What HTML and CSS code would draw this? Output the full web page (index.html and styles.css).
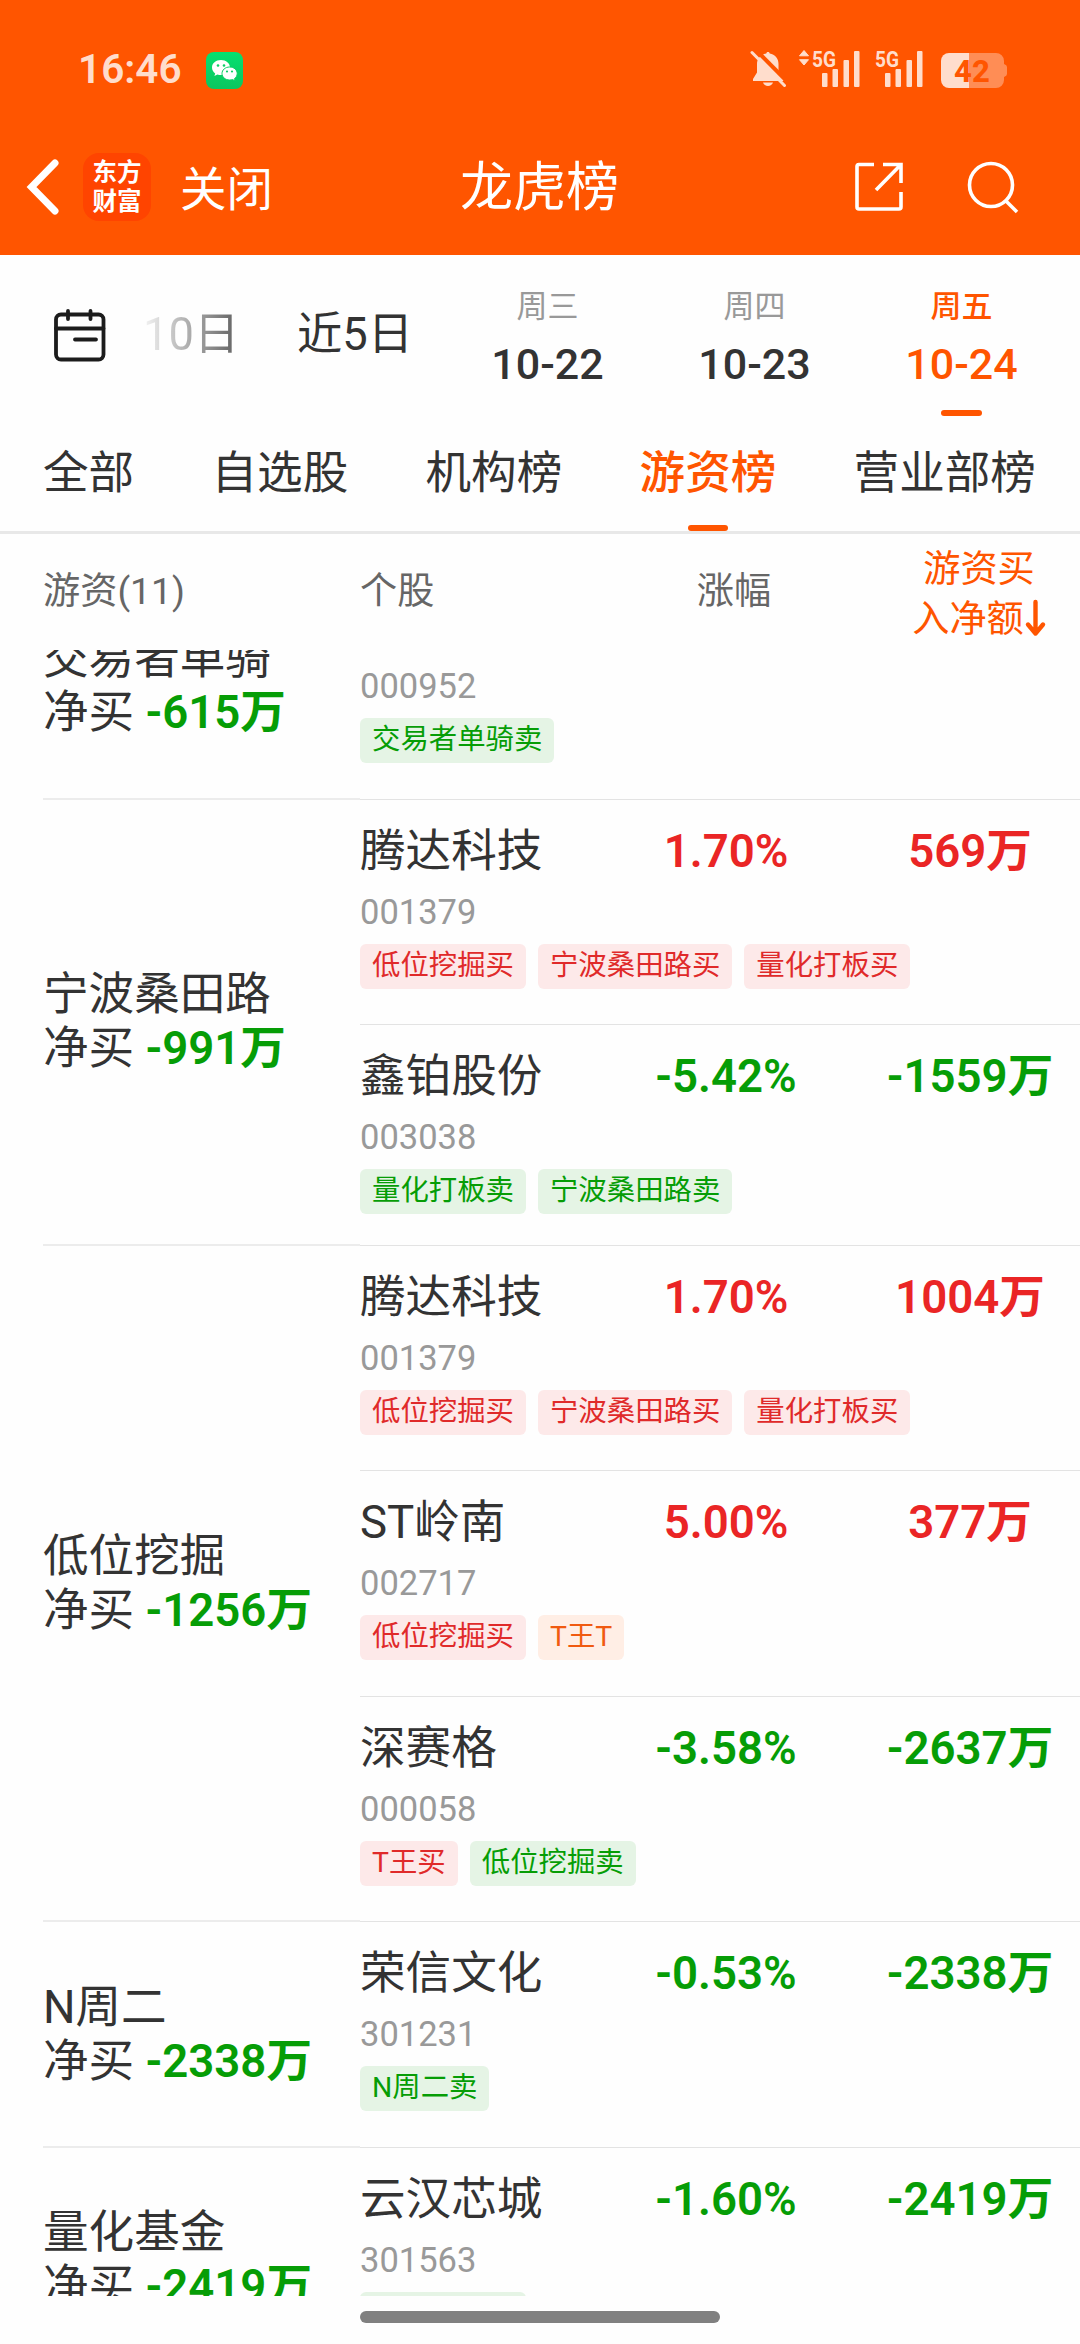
FILE: index.html
```html
<!DOCTYPE html>
<html lang="zh-CN">
<head>
  <meta charset="UTF-8" />
  <title>龙虎榜</title>
  <meta name="viewport" content="width=device-width, initial-scale=1.0" />
  <link rel="stylesheet" href="styles.css">
</head>
<body>
  <header class="header">
    <div class="status-bar">
      <span class="clock">16:46</span>
      <svg class="wechat" width="37" height="37" viewBox="0 0 37 37">
        <defs>
          <linearGradient id="wx" x1="0" y1="0" x2="0" y2="1">
            <stop offset="0" stop-color="#06e070" />
            <stop offset="1" stop-color="#0ac65f" />
          </linearGradient>
        </defs>
        <rect width="37" height="37" rx="8" fill="url(#wx)" />
        <path d="M15 8c-5.200 0-9 3.300-9 7.500 0 2.400 1.200 4.500 3.200 5.900l-.8 2.600 3-1.500c1.100.4 2.400.5 3.600.5 5 0 9-3.300 9-7.500S20 8 15 8z" fill="#fff" />
        <path d="M23.700 15c-4.500 0-7.700 3-7.700 6.500s3.200 6.500 7.700 6.500c1 0 2-.1 2.900-.4l2.600 1.300-.7-2.300c1.700-1.200 2.700-3 2.700-5.100 0-3.500-3.100-6.500-7.500-6.500z" fill="#fff" stroke="#0bd066" stroke-width="1" />
        <g fill="#0bd066">
          <circle cx="12" cy="13.500" r="1.300" /><circle cx="18" cy="13.500" r="1.300" />
          <circle cx="21" cy="19.500" r="1.100" /><circle cx="26" cy="19.500" r="1.100" />
        </g>
      </svg>
      <div class="status-icons">
        <svg class="bell" width="37" height="38" viewBox="0 0 37 38" fill="#ffddcc">
          <path d="M18 2c1 0 1.700.7 1.700 1.600C25 4.500 28.500 8.500 28.500 14v8l5 7v2H3v-2l4-6.500V14C7 8.500 11 4.500 16.300 3.600 16.300 2.700 17 2 18 2z" />
          <path d="M13 32.500h10c-.8 2.300-2.600 3.500-5 3.500s-4.200-1.200-5-3.500z" />
          <path d="M5-1 39 33.500" stroke="#ff5500" stroke-width="4" />
          <path d="M2 2.500 34.500 35.500" stroke="#ffddcc" stroke-width="3" stroke-linecap="round" />
        </svg>
        <svg class="signal" width="64" height="38" viewBox="0 0 64 38" fill="#ffddcc">
          <path d="M6 1.500 10.500 6.800h-9zM6 16 1.500 10.700h9z" stroke="#ffddcc" stroke-linejoin="round" />
          <text class="net" x="14" y="17.500" textLength="24" lengthAdjust="spacingAndGlyphs">5G</text>
          <g><rect x="24" y="24" width="5.500" height="14" rx="1" /><rect x="34.500" y="20" width="5.500" height="18" rx="1" /><rect x="45.500" y="11" width="5.500" height="27" rx="1" /><rect x="56" y="2" width="5.500" height="36" rx="1" /></g>
        </svg>
        <svg class="signal" width="64" height="38" viewBox="0 0 64 38" fill="#ffddcc">
          <text class="net" x="14" y="17.500" textLength="24" lengthAdjust="spacingAndGlyphs">5G</text>
          <g><rect x="24" y="24" width="5.500" height="14" rx="1" /><rect x="34.500" y="20" width="5.500" height="18" rx="1" /><rect x="45.500" y="11" width="5.500" height="27" rx="1" /><rect x="56" y="2" width="5.500" height="36" rx="1" /></g>
        </svg>
        <svg class="battery" width="67" height="35" viewBox="0 0 67 35">
          <path d="M28 0h27a8 8 0 0 1 8 8v3q3 1 3 3v7q0 2-3 3v3a8 8 0 0 1-8 8H28z" fill="#ff8d55" />
          <path d="M28 0H8a8 8 0 0 0-8 8v19a8 8 0 0 0 8 8h20z" fill="#ffddcc" />
          <text class="level" x="13" y="28.500">42</text>
        </svg>
      </div>
    </div>
    <nav class="nav-bar">
      <svg class="back" width="34" height="56" viewBox="0 0 34 56" fill="none" stroke="#fff" stroke-width="7" stroke-linecap="round">
        <path d="M29 4 5.500 28 29 52" />
      </svg>
      <div class="logo">东方<br>财富</div>
      <span class="close">关闭</span>
      <h1 class="title">龙虎榜</h1>
      <svg class="share" width="50" height="50" viewBox="0 0 50 50" fill="none" stroke="#fff" stroke-width="3.600">
        <path d="M20 2.500H5Q3 2.500 3 4.500V45q0 2 2 2h40q2 0 2-2V30" />
        <path d="M29 2.500h18V21M47 2.500 22 28" />
      </svg>
      <svg class="search" width="52" height="52" viewBox="0 0 52 52" fill="none" stroke="#fff" stroke-width="3.600">
        <circle cx="24" cy="24" r="21.500" />
        <path d="M38.500 39.500 50 51" />
      </svg>
    </nav>
  </header>

  <section class="dates">
    <svg class="calendar" width="54" height="54" viewBox="0 0 54 54" fill="none" stroke="#1c1c1c" stroke-width="3.800" stroke-linecap="round">
      <rect x="3" y="6.500" width="47.500" height="45" rx="5" />
      <path d="M3 20.500h47.500M15 3v8M37.500 3v8M22 31.500h21" />
    </svg>
    <span class="range fade">10日</span>
    <span class="range">近5日</span>
    <div class="day"><span class="week">周三</span><span class="date">10-22</span></div>
    <div class="day"><span class="week">周四</span><span class="date">10-23</span></div>
    <div class="day active"><span class="week">周五</span><span class="date">10-24</span></div>
  </section>

  <nav class="tabs">
    <span class="tab">全部</span>
    <span class="tab">自选股</span>
    <span class="tab">机构榜</span>
    <span class="tab active">游资榜</span>
    <span class="tab">营业部榜</span>
  </nav>

  <div class="table-head">
    <span class="th-trader">游资(11)</span>
    <span class="th-stock">个股</span>
    <span class="th-change">涨幅</span>
    <span class="th-amount">游资买<br>入净额<svg width="21" height="38" viewBox="0 0 21 38" fill="none" stroke="#ff5500" stroke-width="4.400" stroke-linecap="round" stroke-linejoin="round"><path d="M10.500 3v31M3 25.500l7.500 9 7.500-9" /></svg></span>
  </div>

  <main class="list">
    <section class="group first">
      <div class="trader">
        <p>交易者单骑</p>
        <p>净买 <b class="down">-615万</b></p>
      </div>
      <div class="stocks">
        <div class="stock">
          <div class="quote"></div>
          <div class="code">000952</div>
          <div class="tags"><span class="tag sell">交易者单骑卖</span></div>
        </div>
      </div>
    </section>

    <section class="group">
      <div class="trader">
        <p>宁波桑田路</p>
        <p>净买 <b class="down">-991万</b></p>
      </div>
      <div class="stocks">
        <div class="stock">
          <div class="quote"><span class="name">腾达科技</span><b class="up">1.70%</b><b class="up">569万</b></div>
          <div class="code">001379</div>
          <div class="tags"><span class="tag buy">低位挖掘买</span><span class="tag buy">宁波桑田路买</span><span class="tag buy">量化打板买</span></div>
        </div>
        <div class="stock short">
          <div class="quote"><span class="name">鑫铂股份</span><b class="down">-5.42%</b><b class="down">-1559万</b></div>
          <div class="code">003038</div>
          <div class="tags"><span class="tag sell">量化打板卖</span><span class="tag sell">宁波桑田路卖</span></div>
        </div>
      </div>
    </section>

    <section class="group">
      <div class="trader">
        <p>低位挖掘</p>
        <p>净买 <b class="down">-1256万</b></p>
      </div>
      <div class="stocks">
        <div class="stock">
          <div class="quote"><span class="name">腾达科技</span><b class="up">1.70%</b><b class="up">1004万</b></div>
          <div class="code">001379</div>
          <div class="tags"><span class="tag buy">低位挖掘买</span><span class="tag buy">宁波桑田路买</span><span class="tag buy">量化打板买</span></div>
        </div>
        <div class="stock">
          <div class="quote"><span class="name">ST岭南</span><b class="up">5.00%</b><b class="up">377万</b></div>
          <div class="code">002717</div>
          <div class="tags"><span class="tag buy">低位挖掘买</span><span class="tag trade">T王T</span></div>
        </div>
        <div class="stock">
          <div class="quote"><span class="name">深赛格</span><b class="down">-3.58%</b><b class="down">-2637万</b></div>
          <div class="code">000058</div>
          <div class="tags"><span class="tag buy">T王买</span><span class="tag sell">低位挖掘卖</span></div>
        </div>
      </div>
    </section>

    <section class="group">
      <div class="trader">
        <p>N周二</p>
        <p>净买 <b class="down">-2338万</b></p>
      </div>
      <div class="stocks">
        <div class="stock">
          <div class="quote"><span class="name">荣信文化</span><b class="down">-0.53%</b><b class="down">-2338万</b></div>
          <div class="code">301231</div>
          <div class="tags"><span class="tag sell">N周二卖</span></div>
        </div>
      </div>
    </section>

    <section class="group">
      <div class="trader">
        <p>量化基金</p>
        <p>净买 <b class="down">-2419万</b></p>
      </div>
      <div class="stocks">
        <div class="stock">
          <div class="quote"><span class="name">云汉芯城</span><b class="down">-1.60%</b><b class="down">-2419万</b></div>
          <div class="code">301563</div>
          <div class="tags"><span class="tag sell">量化基金卖</span></div>
        </div>
      </div>
    </section>
  </main>

  <footer class="home-bar"></footer>
</body>
</html>
```
FILE: styles.css
```css
* {
  box-sizing: border-box;
}

body {
  margin: 0;
  width: 1080px;
  height: 2344px;
  overflow: hidden;
  display: flex;
  flex-direction: column;
  background: #fefefe;
  color: #333;
  font-family: Roboto, "Noto Sans CJK SC", sans-serif;
}

svg {
  display: block;
  flex: none;
  overflow: visible;
}

p {
  margin: 0;
}

/* header */
.header {
  height: 255px;
  flex: none;
  background: #ff5500;
  color: #fff;
}

.status-bar {
  height: 138px;
  padding: 0 72px 0 78px;
  display: flex;
  align-items: center;
}

.clock {
  font-size: 40.500px;
  font-weight: 600;
  line-height: 48px;
  color: #ffddcc;
}

.wechat {
  margin: 2px 0 0 24px;
}

.status-icons {
  margin-left: auto;
  display: flex;
  align-items: center;
}

.bell {
  overflow: hidden;
  margin: -1px 1px 0 -1px;
}

.signal {
  margin: -2px 0 0 10px;
}

.signal + .signal {
  margin-left: -1px;
}

.net {
  font-size: 22.500px;
  font-weight: 700;
}

.battery {
  margin: 2px 0 0 16px;
}

.level {
  font-size: 31px;
  font-weight: 800;
  fill: #ff5500;
}

.nav-bar {
  height: 98px;
  display: flex;
  align-items: center;
  padding: 0 61px 0 26px;
}

.logo {
  width: 68px;
  height: 68px;
  margin-left: 23px;
  padding-top: 3px;
  border-radius: 16px;
  background: #ff4400;
  font-family: "Noto Sans CJK SC", sans-serif;
  font-size: 24.500px;
  font-weight: 700;
  line-height: 29px;
  text-align: center;
}

.close {
  width: 93px;
  margin-left: 29px;
  padding-bottom: 3px;
  font-size: 46.500px;
}

.title {
  width: 160px;
  margin: 0 0 0 187px;
  padding-bottom: 8px;
  font-size: 53px;
  font-weight: 400;
  white-space: nowrap;
}

.share {
  margin-left: auto;
}

.search {
  margin-left: 63px;
}

/* dates */
.dates {
  height: 163px;
  flex: none;
  display: flex;
  align-items: center;
}

.calendar {
  margin: -3px 0 0 53px;
}

.range {
  width: 116px;
  margin: -3px 0 0 62px;
  font-size: 45.300px;
  line-height: 54px;
  white-space: nowrap;
}

.fade {
  width: 92px;
  margin-left: 36px;
  background: linear-gradient(90deg, #f4f4f4, #666);
  -webkit-background-clip: text;
  background-clip: text;
  color: transparent;
}

.day {
  width: 207px;
  height: 100%;
  padding-top: 29px;
  display: flex;
  flex-direction: column;
  align-items: center;
}

.range + .day {
  margin-left: 31px;
}

.week {
  font-size: 31px;
  line-height: 46px;
  color: #999;
}

.date {
  margin-top: 8px;
  font-size: 43px;
  font-weight: 500;
  line-height: 52px;
}

.day.active .week,
.day.active .date {
  color: #ff5500;
}

.day.active .week {
  font-weight: 500;
}

.day.active::after {
  content: "";
  width: 41px;
  height: 6px;
  margin-top: 20px;
  border-radius: 3px;
  background: #ff5500;
}

/* tabs */
.tabs {
  height: 116px;
  flex: none;
  padding: 0 44px 0 43px;
  display: flex;
  justify-content: space-between;
  border-bottom: 3px solid #e8e8e8;
}

.tab {
  display: flex;
  flex-direction: column;
  align-items: center;
  padding-top: 26px;
  font-size: 45.600px;
  line-height: 60px;
}

.tab.active {
  color: #ff5500;
  font-weight: 500;
}

.tab.active::after {
  content: "";
  width: 40px;
  height: 6px;
  margin-top: 21px;
  border-radius: 3px;
  background: #ff5500;
}

/* table */
.table-head {
  height: 116px;
  flex: none;
  display: grid;
  grid-template-columns: 317px 252px 244px 224px;
  padding: 0 0 2px 43px;
  align-items: center;
  color: #666;
  font-size: 37.200px;
  line-height: 50px;
}

.th-change {
  text-align: center;
}

.th-amount {
  padding: 6px 0 0 22px;
  text-align: center;
  color: #ff5500;
}

.th-amount svg {
  display: inline-block;
  vertical-align: -5px;
  margin-left: 1px;
}

.list {
  height: 1646px;
  flex: none;
  overflow: hidden;
}

.group {
  display: flex;
  margin-left: 43px;
}

.group.first {
  margin-top: -76px;
}

.trader {
  width: 317px;
  flex: none;
  display: flex;
  flex-direction: column;
  justify-content: center;
  padding-top: 1px;
  border-bottom: 2px solid #ececec;
  font-size: 45.600px;
  line-height: 54px;
  white-space: nowrap;
}

.trader b,
.quote b {
  font-weight: 600;
}

.stocks {
  flex: 1;
}

.stock {
  height: 225.600px;
  padding-top: 22px;
  border-bottom: 1px solid #e3e3e3;
}

.stock.short {
  height: 220.500px;
}

.quote {
  height: 60px;
  display: grid;
  grid-template-columns: 244px 244px 244px;
  font-size: 45.600px;
  line-height: 60px;
}

.quote b {
  text-align: center;
}

.up {
  color: #ea2525;
}

.down {
  color: #069d06;
}

.code {
  margin-top: 8px;
  font-size: 34.500px;
  line-height: 44px;
  color: #999;
}

.tags {
  display: flex;
  gap: 12px;
  margin-top: 10px;
}

.tag {
  height: 45px;
  padding: 0 12px;
  border-radius: 6px;
  font-size: 28.400px;
  line-height: 44px;
}

.buy {
  background: #fde9e9;
  color: #e02a2a;
}

.sell {
  background: #e5f4e5;
  color: #069d06;
}

.trade {
  background: #ffeee5;
  color: #f05a10;
}

.home-bar {
  width: 360px;
  height: 12px;
  margin: 15px auto 0;
  flex: none;
  border-radius: 6px;
  background: #808080;
}
```
